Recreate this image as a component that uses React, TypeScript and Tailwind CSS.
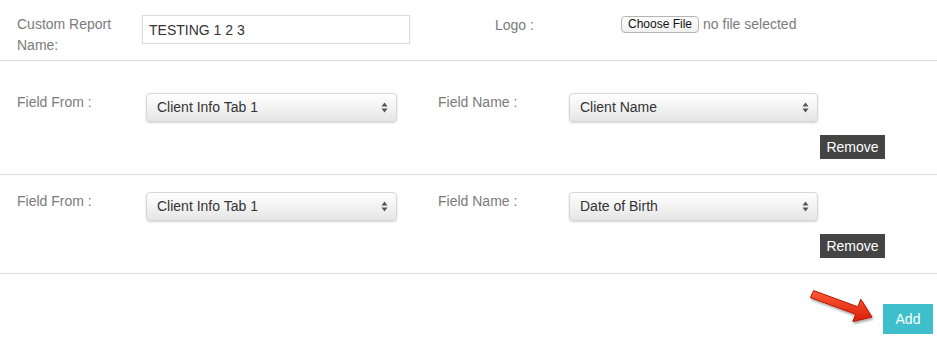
import React from "react";

type Row = { from: string; name: string; first?: boolean };

const rows: Row[] = [
  { from: "Client Info Tab 1", name: "Client Name", first: true },
  { from: "Client Info Tab 1", name: "Date of Birth" },
];

function FakeSelect({ value, width }: { value: string; width: string }) {
  return (
    <div
      className={`${width} flex h-[29px] items-center justify-between rounded-[4px] border border-[#d6d6d6] bg-gradient-to-b from-white to-[#e6e6e6] pl-[10px] pr-[8px] text-[14px] text-[#333] shadow-[0_1px_2px_rgba(0,0,0,0.18)]`}
    >
      <span>{value}</span>
      <svg width="7" height="11" viewBox="0 0 7 11" className="text-[#555]">
        <path d="M3.5 0.5 L6.5 4.5 H0.5 Z" fill="currentColor" />
        <path d="M3.5 10.5 L6.5 6.5 H0.5 Z" fill="currentColor" />
      </svg>
    </div>
  );
}

function FieldRow({ row }: { row: Row }) {
  return (
    <div
      className={`border-b border-[#dddddd] pl-[17px] pr-[52px] ${row.first ? "pt-[31px]" : "pt-[16px]"} pb-[15px]`}
    >
      <div className="flex items-start">
        <label className="w-[129px] leading-[20px] text-[#7b7b7b]">Field From :</label>
        <div className="mt-[1px]">
          <FakeSelect value={row.from} width="w-[251px]" />
        </div>
        <label className="ml-[41px] w-[131px] leading-[20px] text-[#7b7b7b]">Field Name :</label>
        <div className="mt-[1px]">
          <FakeSelect value={row.name} width="w-[249px]" />
        </div>
      </div>
      <div className="mt-[13px] flex justify-end">
        <button className="h-[24px] w-[65px] bg-[#444444] text-[14px] text-white">Remove</button>
      </div>
    </div>
  );
}

export default function App() {
  return (
    <div
      className="relative h-[342px] w-[937px] bg-white text-[14px]"
      style={{ fontFamily: '"Liberation Sans", Arial, sans-serif' }}
    >
      <div className="flex h-[61px] items-start border-b border-[#dddddd] pl-[17px]">
        <label className="mt-[14px] w-[125px] leading-[21px] text-[#7b7b7b]">
          Custom Report
          <br />
          Name:
        </label>
        <input
          className="mt-[15px] h-[29px] w-[268px] border border-[#d9d9d9] px-[6px] text-[14px] text-[#333] outline-none"
          defaultValue="TESTING 1 2 3"
        />
        <label className="ml-[85px] mt-[15px] w-[126px] leading-[20px] text-[#7b7b7b]">Logo :</label>
        <div className="mt-[14px] flex items-center">
          <button className="h-[17px] rounded-[4px] border border-[#b5b5b5] bg-gradient-to-b from-white to-[#f0f0f0] px-[6px] text-[12px] leading-[15px] text-[#111]">
            Choose File
          </button>
          <span className="ml-[4px] text-[14px] leading-[20px] text-[#7b7b7b]">no file selected</span>
        </div>
      </div>

      {rows.map((row, i) => (
        <FieldRow key={i} row={row} />
      ))}

      <div className="flex justify-end pr-[4px] pt-[30px]">
        <button className="h-[30px] w-[50px] bg-[#3ebfcb] text-[14px] text-white">Add</button>
      </div>

      <svg
        className="absolute left-[800px] top-[283px]"
        width="80"
        height="46"
        viewBox="0 0 80 46"
      >
        <defs>
          <linearGradient id="arrowFill" x1="0" y1="0" x2="0" y2="1">
            <stop offset="0" stopColor="#ff5a3a" />
            <stop offset="1" stopColor="#d81e05" />
          </linearGradient>
          <filter id="arrowShadow" x="-20%" y="-20%" width="140%" height="160%">
            <feDropShadow dx="1" dy="2" stdDeviation="1.2" floodColor="#000" floodOpacity="0.35" />
          </filter>
        </defs>
        <polygon
          points="13.6,7.6 57.8,23.8 60.8,16.2 72,34 52.8,38.6 55.6,31.2 10.4,14.6"
          fill="url(#arrowFill)"
          stroke="#b51800"
          strokeWidth="1"
          strokeLinejoin="round"
          filter="url(#arrowShadow)"
        />
      </svg>
    </div>
  );
}
